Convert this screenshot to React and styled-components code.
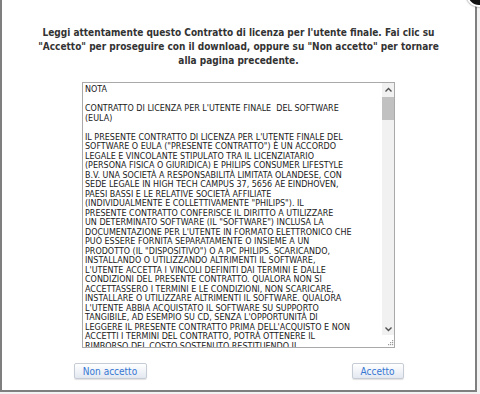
import { createGlobalStyle } from "styled-components";
import styled from "styled-components";

const GlobalStyle = createGlobalStyle`
  html, body {
    margin: 0;
    padding: 0;
    background: #f2f2f2;
  }
  body {
    width: 480px;
    height: 394px;
    overflow: hidden;
  }
`;

const Dialog = styled.div`
  position: relative;
  box-sizing: border-box;
  width: 477px;
  height: 392px;
  background: #ffffff;
  border: 2px solid #7f7f7f;
  border-top: none;
  display: flex;
  flex-direction: column;
  align-items: center;
  padding-top: 26px;
  font-family: "DejaVu Sans", Verdana, sans-serif;
`;

const CloseButton = styled.div`
  position: absolute;
  top: -19px;
  right: -17px;
  width: 22px;
  height: 22px;
  border-radius: 50%;
  background: #111;
  border: 2px solid #fff;
  box-shadow: 0 0 2px rgba(0, 0, 0, 0.6);
`;

const Intro = styled.p`
  margin: 0;
  font-family: "DejaVu Sans Condensed", "DejaVu Sans", sans-serif;
  font-stretch: condensed;
  font-size: 10px;
  font-weight: bold;
  line-height: 14px;
  color: #333;
  text-align: center;
  white-space: nowrap;
`;

const LicenseBox = styled.div`
  box-sizing: border-box;
  margin-top: 14px;
  width: 313px;
  height: 266px;
  border: 1px solid #a9a9a9;
  display: flex;
  overflow: hidden;
`;

const LicenseText = styled.div`
  flex: 1;
  padding: 2px 0 0 2px;
  font-size: 8px;
  line-height: 9.5px;
  color: #1a1a1a;
  white-space: pre;
  overflow: hidden;
`;

const Scrollbar = styled.div`
  width: 12px;
  display: flex;
  flex-direction: column;
  align-items: center;
  background: #f1f1f1;
`;

const Arrow = styled.div`
  height: 12px;
  width: 12px;
  display: flex;
  align-items: center;
  justify-content: center;
`;

const Track = styled.div`
  flex: 1;
  width: 12px;
`;

const Thumb = styled.div`
  margin-top: 2px;
  height: 23px;
  width: 12px;
  background: #c1c1c1;
`;

const Grip = styled.div`
  height: 12px;
  width: 12px;
  display: flex;
  align-items: flex-end;
  justify-content: flex-end;
  background: #fff;
`;

const ButtonRow = styled.div`
  margin-top: 15px;
  width: 330px;
  display: flex;
  justify-content: space-between;
`;

const Button = styled.button`
  box-sizing: border-box;
  height: 16px;
  width: ${(p) => p.$w}px;
  padding: 0;
  font-family: "DejaVu Sans Condensed", "DejaVu Sans", sans-serif;
  font-stretch: condensed;
  font-size: 10px;
  color: #3577d4;
  background: linear-gradient(#ffffff, #e3e8f0);
  border: 1px solid #c6ccd6;
  border-radius: 2px;
  box-shadow: 0 1px 1px rgba(0, 0, 0, 0.12);
`;

const lines = [
  "NOTA",
  "",
  "CONTRATTO DI LICENZA PER L'UTENTE FINALE  DEL SOFTWARE",
  "(EULA)",
  "",
  "IL PRESENTE CONTRATTO DI LICENZA PER L'UTENTE FINALE DEL",
  'SOFTWARE O EULA ("PRESENTE CONTRATTO") È UN ACCORDO',
  "LEGALE E VINCOLANTE STIPULATO TRA IL LICENZIATARIO",
  "(PERSONA FISICA O GIURIDICA) E PHILIPS CONSUMER LIFESTYLE",
  "B.V. UNA SOCIETÀ A RESPONSABILITÀ LIMITATA OLANDESE, CON",
  "SEDE LEGALE IN HIGH TECH CAMPUS 37, 5656 AE EINDHOVEN,",
  "PAESI BASSI E LE RELATIVE SOCIETÀ AFFILIATE",
  '(INDIVIDUALMENTE E COLLETTIVAMENTE "PHILIPS"). IL',
  "PRESENTE CONTRATTO CONFERISCE IL DIRITTO A UTILIZZARE",
  'UN DETERMINATO SOFTWARE (IL "SOFTWARE") INCLUSA LA',
  "DOCUMENTAZIONE PER L'UTENTE IN FORMATO ELETTRONICO CHE",
  "PUÒ ESSERE FORNITA SEPARATAMENTE O INSIEME A UN",
  'PRODOTTO (IL "DISPOSITIVO") O A PC PHILIPS. SCARICANDO,',
  "INSTALLANDO O UTILIZZANDO ALTRIMENTI IL SOFTWARE,",
  "L'UTENTE ACCETTA I VINCOLI DEFINITI DAI TERMINI E DALLE",
  "CONDIZIONI DEL PRESENTE CONTRATTO. QUALORA NON SI",
  "ACCETTASSERO I TERMINI E LE CONDIZIONI, NON SCARICARE,",
  "INSTALLARE O UTILIZZARE ALTRIMENTI IL SOFTWARE. QUALORA",
  "L'UTENTE ABBIA ACQUISTATO IL SOFTWARE SU SUPPORTO",
  "TANGIBILE, AD ESEMPIO SU CD, SENZA L'OPPORTUNITÀ DI",
  "LEGGERE IL PRESENTE CONTRATTO PRIMA DELL'ACQUISTO E NON",
  "ACCETTI I TERMINI DEL CONTRATTO, POTRÀ OTTENERE IL",
  "RIMBORSO DEL COSTO SOSTENUTO RESTITUENDO IL",
];

export default function App() {
  return (
    <>
      <GlobalStyle />
      <Dialog>
        <CloseButton />
        <Intro>
          Leggi attentamente questo Contratto di licenza per l'utente finale. Fai clic su
          <br />
          "Accetto" per proseguire con il download, oppure su "Non accetto" per tornare
          <br />
          alla pagina precedente.
        </Intro>
        <LicenseBox>
          <LicenseText>{lines.join("\n")}</LicenseText>
          <Scrollbar>
            <Arrow>
              <svg width="7" height="5" viewBox="0 0 7 5">
                <path d="M0.5 4.5 L3.5 1.5 L6.5 4.5" fill="none" stroke="#505050" strokeWidth="1.4" />
              </svg>
            </Arrow>
            <Thumb />
            <Track />
            <Arrow>
              <svg width="7" height="5" viewBox="0 0 7 5">
                <path d="M0.5 0.5 L3.5 3.5 L6.5 0.5" fill="none" stroke="#505050" strokeWidth="1.4" />
              </svg>
            </Arrow>
            <Grip>
              <svg width="8" height="8" viewBox="0 0 8 8">
                <g fill="#9a9a9a">
                  <rect x="6" y="1" width="1.2" height="1.2" />
                  <rect x="4" y="3" width="1.2" height="1.2" />
                  <rect x="6" y="3" width="1.2" height="1.2" />
                  <rect x="2" y="5" width="1.2" height="1.2" />
                  <rect x="4" y="5" width="1.2" height="1.2" />
                  <rect x="6" y="5" width="1.2" height="1.2" />
                </g>
              </svg>
            </Grip>
          </Scrollbar>
        </LicenseBox>
        <ButtonRow>
          <Button $w={73}>Non accetto</Button>
          <Button $w={52}>Accetto</Button>
        </ButtonRow>
      </Dialog>
    </>
  );
}
